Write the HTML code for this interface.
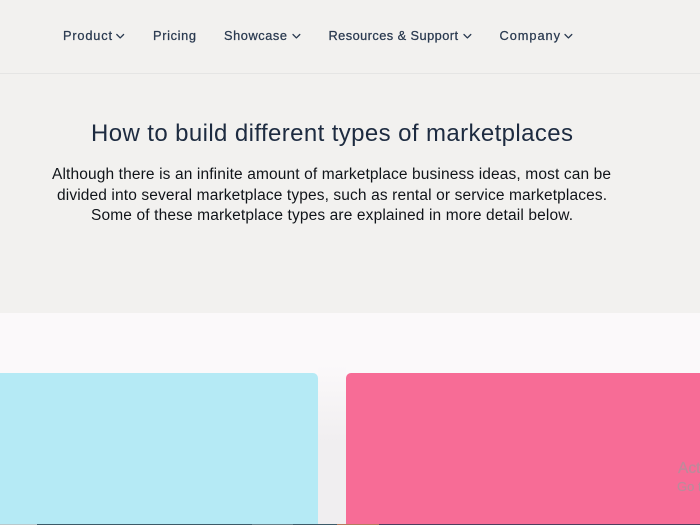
<!DOCTYPE html>
<html lang="en">
<head>
<meta charset="utf-8">
<title>How to build different types of marketplaces</title>
<style>
html,body{margin:0;padding:0;width:700px;height:525px;overflow:hidden;background:#f2f1ef}
svg{position:absolute;left:0;top:0;display:block}
.nav{font:500 12.8px "Liberation Sans",sans-serif;fill:#2a3a50;stroke:#2a3a50;stroke-width:.25px}
.h{font:24px "Liberation Sans",sans-serif;fill:#1d2b40}
.b{font:15.5px "Liberation Sans",sans-serif;fill:#101419}
.w{font:15.5px "Liberation Sans",sans-serif;fill:#bd8a9b;stroke:#bd8a9b;stroke-width:.25px}
.w2{font:13px "Liberation Sans",sans-serif;fill:#bd8a9b;stroke:#bd8a9b;stroke-width:.2px}
.c{fill:none;stroke:#2a3a50;stroke-width:1.3;stroke-linecap:round;stroke-linejoin:round}
</style>
</head>
<body>
<svg width="700" height="525" viewBox="0 0 700 525" xmlns="http://www.w3.org/2000/svg">
<defs>
<linearGradient id="g" x1="0" y1="0" x2="0" y2="1">
<stop offset="0" stop-color="#fbf9fa"/>
<stop offset="1" stop-color="#f0eef0"/>
</linearGradient>
</defs>
<rect width="700" height="525" fill="#f2f1ef"/>
<rect y="73" width="700" height="1" fill="#e5e5e4"/>
<rect y="313" width="700" height="212" fill="#fbf9fa"/>
<rect x="318" y="365" width="28" height="80" fill="url(#g)"/>
<rect x="318" y="445" width="28" height="80" fill="#f0eef0"/>
<rect x="-10" y="373" width="328" height="170" rx="5" fill="#b5eaf5"/>
<rect x="346" y="373" width="370" height="170" rx="5" fill="#f76c96"/>

<rect x="0" y="524" width="37" height="1" fill="#b8c8cc"/>
<rect x="37" y="524" width="215" height="1" fill="#3d5a68"/>
<rect x="252" y="524" width="41" height="1" fill="#66808a"/>
<rect x="293" y="524" width="44" height="1" fill="#3d5a68"/>
<rect x="337" y="524" width="42" height="1" fill="#b57a5e"/>
<rect x="379" y="524" width="321" height="1" fill="#4f3d5e"/>

<text class="nav" x="63" y="40" textLength="49" lengthAdjust="spacing">Product</text>
<path class="c" d="M116.800 34.500l3.400 3.400 3.400-3.400"/>
<text class="nav" x="153" y="40" textLength="43" lengthAdjust="spacing">Pricing</text>
<text class="nav" x="224" y="40" textLength="63" lengthAdjust="spacing">Showcase</text>
<path class="c" d="M293 34.500l3.400 3.400 3.400-3.400"/>
<text class="nav" x="328.500" y="40" textLength="129.500" lengthAdjust="spacing">Resources &amp; Support</text>
<path class="c" d="M464 34.500l3.400 3.400 3.400-3.400"/>
<text class="nav" x="499.500" y="40" textLength="60.500" lengthAdjust="spacing">Company</text>
<path class="c" d="M565 34.500l3.400 3.400 3.400-3.400"/>

<text class="h" x="91" y="141" textLength="482" lengthAdjust="spacing">How to build different types of marketplaces</text>
<text class="b" x="52" y="179" textLength="559" lengthAdjust="spacing">Although there is an infinite amount of marketplace business ideas, most can be</text>
<text class="b" x="57" y="200" textLength="550" lengthAdjust="spacing">divided into several marketplace types, such as rental or service marketplaces.</text>
<text class="b" x="91" y="220" textLength="482" lengthAdjust="spacing">Some of these marketplace types are explained in more detail below.</text>

<text class="w" x="678" y="473">Activate Windows</text>
<text class="w2" x="677" y="491">Go to Settings to activate Windows.</text>
</svg>
</body>
</html>
